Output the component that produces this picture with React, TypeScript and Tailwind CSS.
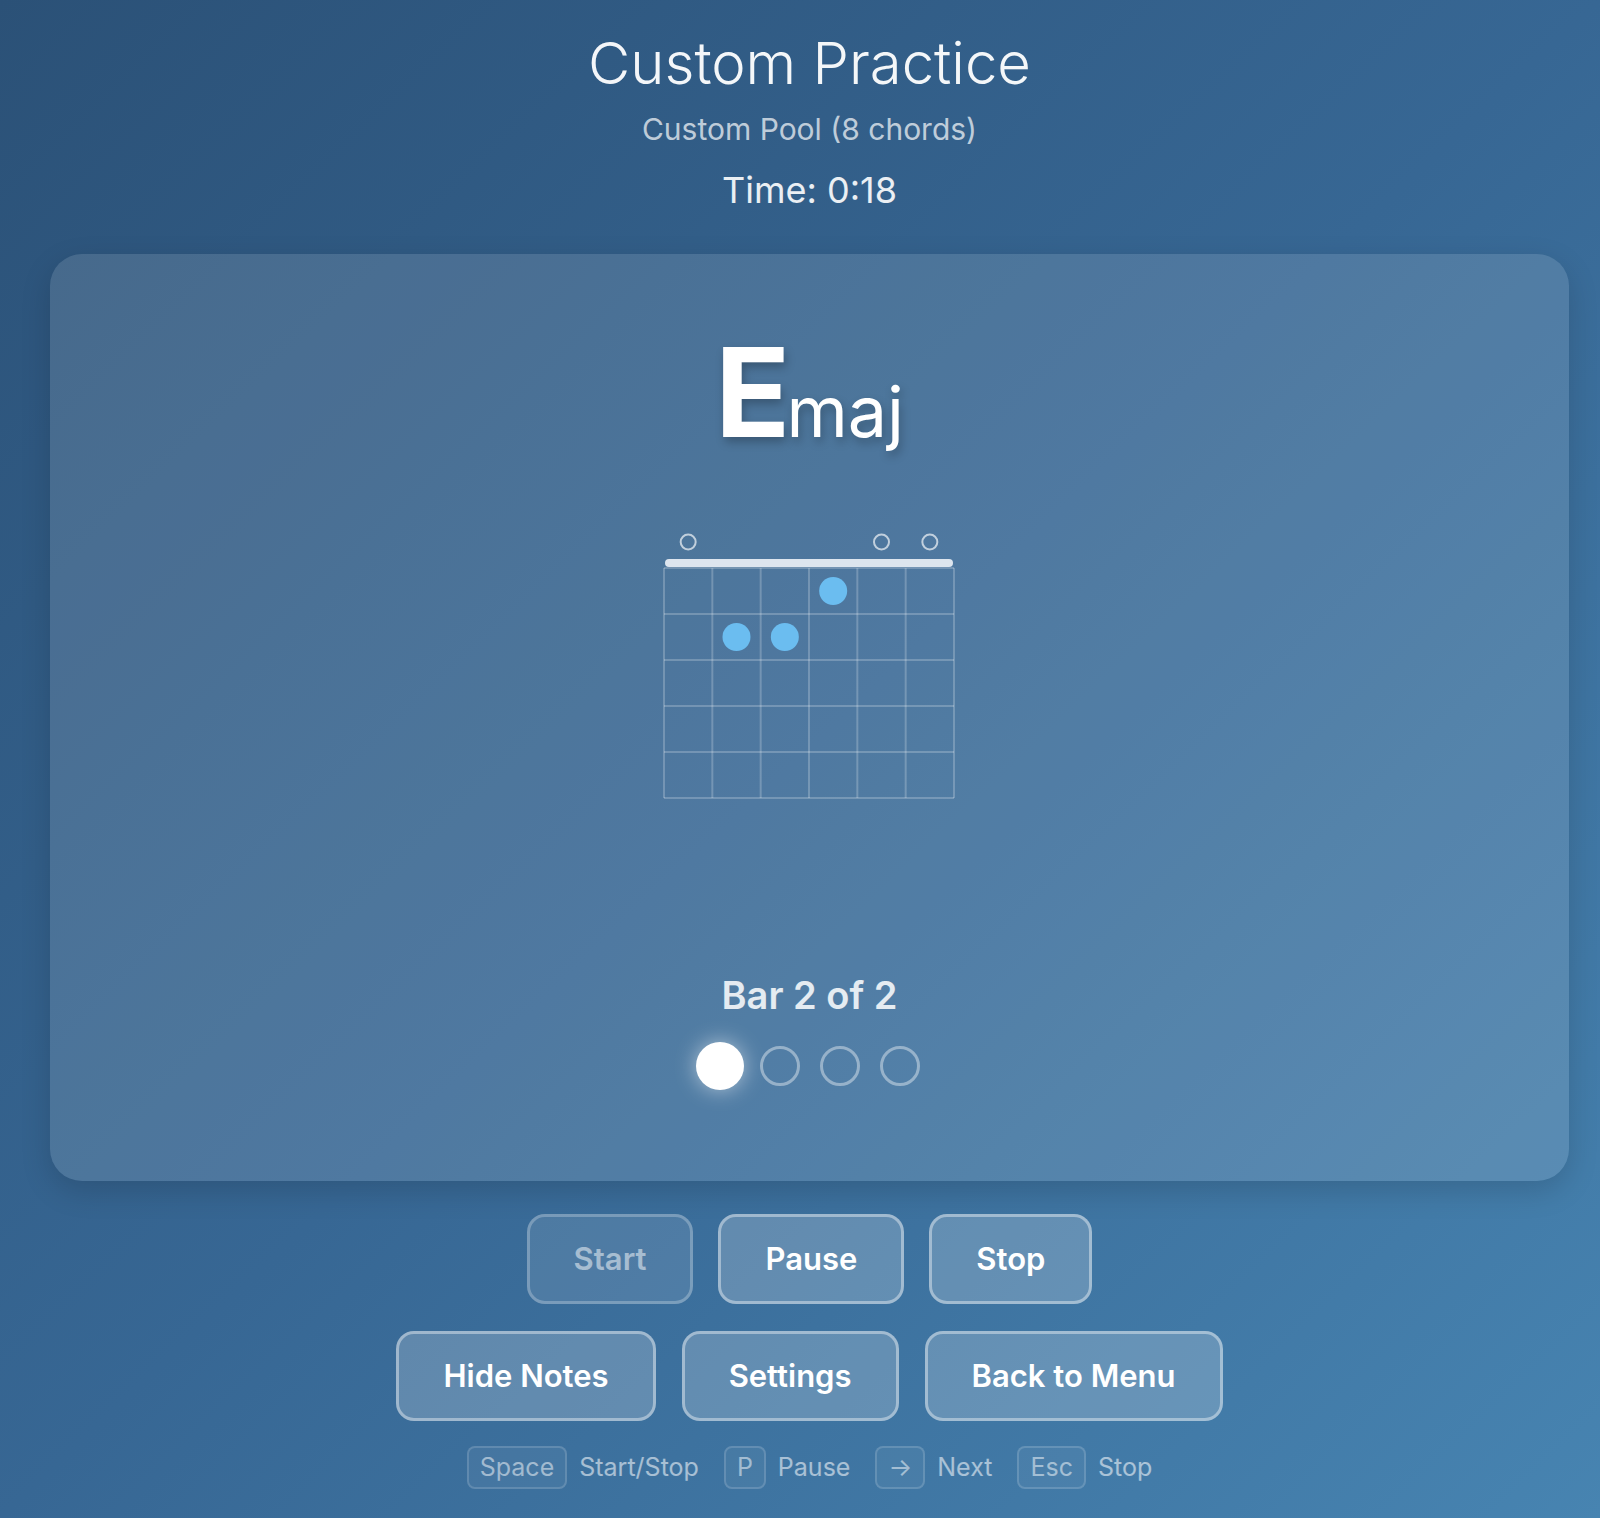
// Practice session screen — current chord, fretboard diagram, bar counter and transport controls.
const STRINGS = 6;
const FRETS = 5;
const GRID_X = 10;
const GRID_Y = 38;
const CELL_W = 290 / STRINGS;
const CELL_H = 46;

// Emaj: open on strings 1, 5, 6; fingers at (fret, string)
const OPEN = [0, 4, 5];
const FINGERS: [number, number][] = [
  [0, 3],
  [1, 1],
  [1, 2],
];

const SHORTCUTS = [
  { key: "Space", label: "Start/Stop" },
  { key: "P", label: "Pause" },
  { key: "→", label: "Next" },
  { key: "Esc", label: "Stop" },
];

function ChordDiagram() {
  const cx = (s: number) => GRID_X + CELL_W * (s + 0.5);
  const cy = (f: number) => GRID_Y + CELL_H * (f + 0.5);
  return (
    <svg width={310} height={272} viewBox="0 0 310 272">
      {OPEN.map((s) => (
        <circle key={s} cx={cx(s)} cy={12} r={7.5} fill="none" stroke="rgba(255,255,255,0.65)" strokeWidth={2} />
      ))}
      <rect x={11} y={29} width={288} height={8} rx={4} fill="#dde5ee" />
      {Array.from({ length: STRINGS + 1 }, (_, i) => (
        <line
          key={`v${i}`}
          x1={GRID_X + CELL_W * i}
          x2={GRID_X + CELL_W * i}
          y1={GRID_Y}
          y2={GRID_Y + CELL_H * FRETS}
          stroke="rgba(255,255,255,0.22)"
          strokeWidth={2}
        />
      ))}
      {Array.from({ length: FRETS + 1 }, (_, i) => (
        <line
          key={`h${i}`}
          x1={GRID_X}
          x2={GRID_X + CELL_W * STRINGS}
          y1={GRID_Y + CELL_H * i}
          y2={GRID_Y + CELL_H * i}
          stroke="rgba(255,255,255,0.22)"
          strokeWidth={2}
        />
      ))}
      {FINGERS.map(([f, s]) => (
        <circle key={`${f}-${s}`} cx={cx(s)} cy={cy(f)} r={14} fill="#6bbdf0" />
      ))}
    </svg>
  );
}

function Btn({ children, disabled }: { children: string; disabled?: boolean }) {
  return (
    <button
      disabled={disabled}
      className={`h-[90px] rounded-[18px] border-[3px] px-[44px] text-[31px] font-semibold ${
        disabled
          ? "border-white/25 bg-white/10 text-white/50"
          : "border-white/40 bg-white/20 text-white"
      }`}
    >
      {children}
    </button>
  );
}

export default function App() {
  return (
    <div className="min-h-screen bg-gradient-to-br from-[#2b5177] via-[#376794] to-[#4784b1] pl-[50px] pr-[31px] pt-[27px] font-['Inter','Noto_Sans',sans-serif]">
      <div className="flex flex-col items-center">
        <h1 className="text-[58px] font-light leading-[72px] text-white/95">Custom Practice</h1>
        <p className="mt-3 text-[30px] leading-[36px] text-white/70">Custom Pool (8 chords)</p>
        <p className="mt-[21px] text-[36px] leading-[44px] text-white/90">Time: 0:18</p>

        <section className="mt-[42px] flex h-[927px] w-full flex-col items-center rounded-[32px] bg-white/12 pt-[76px] shadow-[0_10px_30px_rgba(0,0,0,0.15)]">
          <div className="flex items-baseline text-white [text-shadow:2px_5px_10px_rgba(0,0,0,0.25)]">
            <span className="text-[124px] font-bold leading-[124px]">E</span>
            <span className="-ml-1 text-[70px] font-normal leading-[124px]">maj</span>
          </div>

          <div className="mt-[56px] -translate-x-px">
            <ChordDiagram />
          </div>

          <p className="mt-[170px] text-[38px] font-semibold leading-[46px] text-white/85">Bar 2 of 2</p>
          <div className="mt-[28px] flex gap-5">
            {[0, 1, 2, 3].map((i) =>
              i === 0 ? (
                <span key={i} className="h-10 w-10 scale-[1.2] rounded-full bg-white shadow-[0_0_18px_rgba(255,255,255,0.55)]" />
              ) : (
                <span key={i} className="h-10 w-10 rounded-full border-[3px] border-white/40" />
              ),
            )}
          </div>
        </section>

        <div className="mt-[33px] flex gap-[25px]">
          <Btn disabled>Start</Btn>
          <Btn>Pause</Btn>
          <Btn>Stop</Btn>
        </div>
        <div className="mt-[27px] flex gap-[26px]">
          <Btn>Hide Notes</Btn>
          <Btn>Settings</Btn>
          <Btn>Back to Menu</Btn>
        </div>

        <div className="mt-[25px] flex items-center gap-[25px]">
          {SHORTCUTS.map((s) => (
            <div key={s.key} className="flex items-center gap-3">
              <kbd className="flex h-[43px] items-center rounded-[8px] border-2 border-white/15 bg-white/5 px-[11px] font-['Inter','Noto_Sans',sans-serif] text-[25px] text-white/50">
                {s.key}
              </kbd>
              <span className="text-[25px] text-white/55">{s.label}</span>
            </div>
          ))}
        </div>
      </div>
    </div>
  );
}
